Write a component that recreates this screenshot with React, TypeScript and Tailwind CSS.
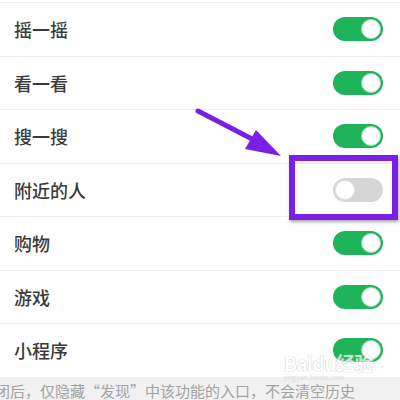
const items = [
  { name: '摇一摇', on: true },
  { name: '看一看', on: true },
  { name: '搜一搜', on: true },
  { name: '附近的人', on: false },
  { name: '购物', on: true },
  { name: '游戏', on: true },
  { name: '小程序', on: true },
];

const Toggle = ({ on }: { on: boolean }) => (
  <div
    className={
      on
        ? 'flex h-[24px] w-[50px] items-center justify-end rounded-full bg-[#1fb45a] p-[2px]'
        : 'flex h-[24px] w-[50px] items-center justify-start rounded-full bg-[#d6d6d6] p-[2px]'
    }
  >
    <div
      className={
        on
          ? 'h-[20px] w-[20px] rounded-full border border-[#9ed9b4] bg-white'
          : 'h-[20px] w-[20px] rounded-full border border-[#e4e4e4] bg-white'
      }
    />
  </div>
);

export default function App() {
  return (
    <div
      className="relative h-[400px] w-[400px] overflow-hidden bg-white"
      style={{ fontFamily: '"Noto Sans CJK SC", "Noto Sans", sans-serif' }}
    >
      <div className="pt-[2px]">
        <ul className="border-t border-[#efefef]">
          {items.map((it) => (
            <li
              key={it.name}
              className="box-border flex h-[53.5px] items-center justify-between border-b border-[#efefef] pl-[14px] pr-[17px]"
            >
              <span className="text-[18px] font-medium leading-none text-[#3a3a3a]">{it.name}</span>
              <Toggle on={it.on} />
            </li>
          ))}
        </ul>
      </div>

      <div className="h-[30px] bg-[#f1f1f1] pt-[4px]">
        <p className="ml-[-20px] whitespace-nowrap text-[15px] leading-[18px] text-[#a3a3a3]">
          关闭后，仅隐藏“发现”中该功能的入口，不会清空历史
        </p>
      </div>

      {/* watermark */}
      <div className="pointer-events-none absolute left-[284px] top-[353px] flex flex-col items-start opacity-70">
        <span className="text-[19px] font-bold leading-none tracking-tight text-white [text-shadow:0_0_1px_#b5b5b5,0_0_1px_#b5b5b5]">
          Baidu经验
        </span>
        <span className="mt-[2px] text-[7px] leading-none text-[#d5d5d5]">jingyan.baidu.com</span>
      </div>

      {/* annotation: box */}
      <div className="absolute left-[289px] top-[155px] h-[65px] w-[109px] border-[6px] border-[#7a1fe3] shadow-[1px_2px_3px_rgba(0,0,0,0.35)]" />

      {/* annotation: arrow */}
      <svg className="absolute left-0 top-0" width="400" height="400" viewBox="0 0 400 400">
        <line x1="198" y1="111" x2="256" y2="141" stroke="#7a1fe3" strokeWidth="5" strokeLinecap="round" />
        <polygon points="281,156 245,149 256,130" fill="#7a1fe3" />
      </svg>
    </div>
  );
}
